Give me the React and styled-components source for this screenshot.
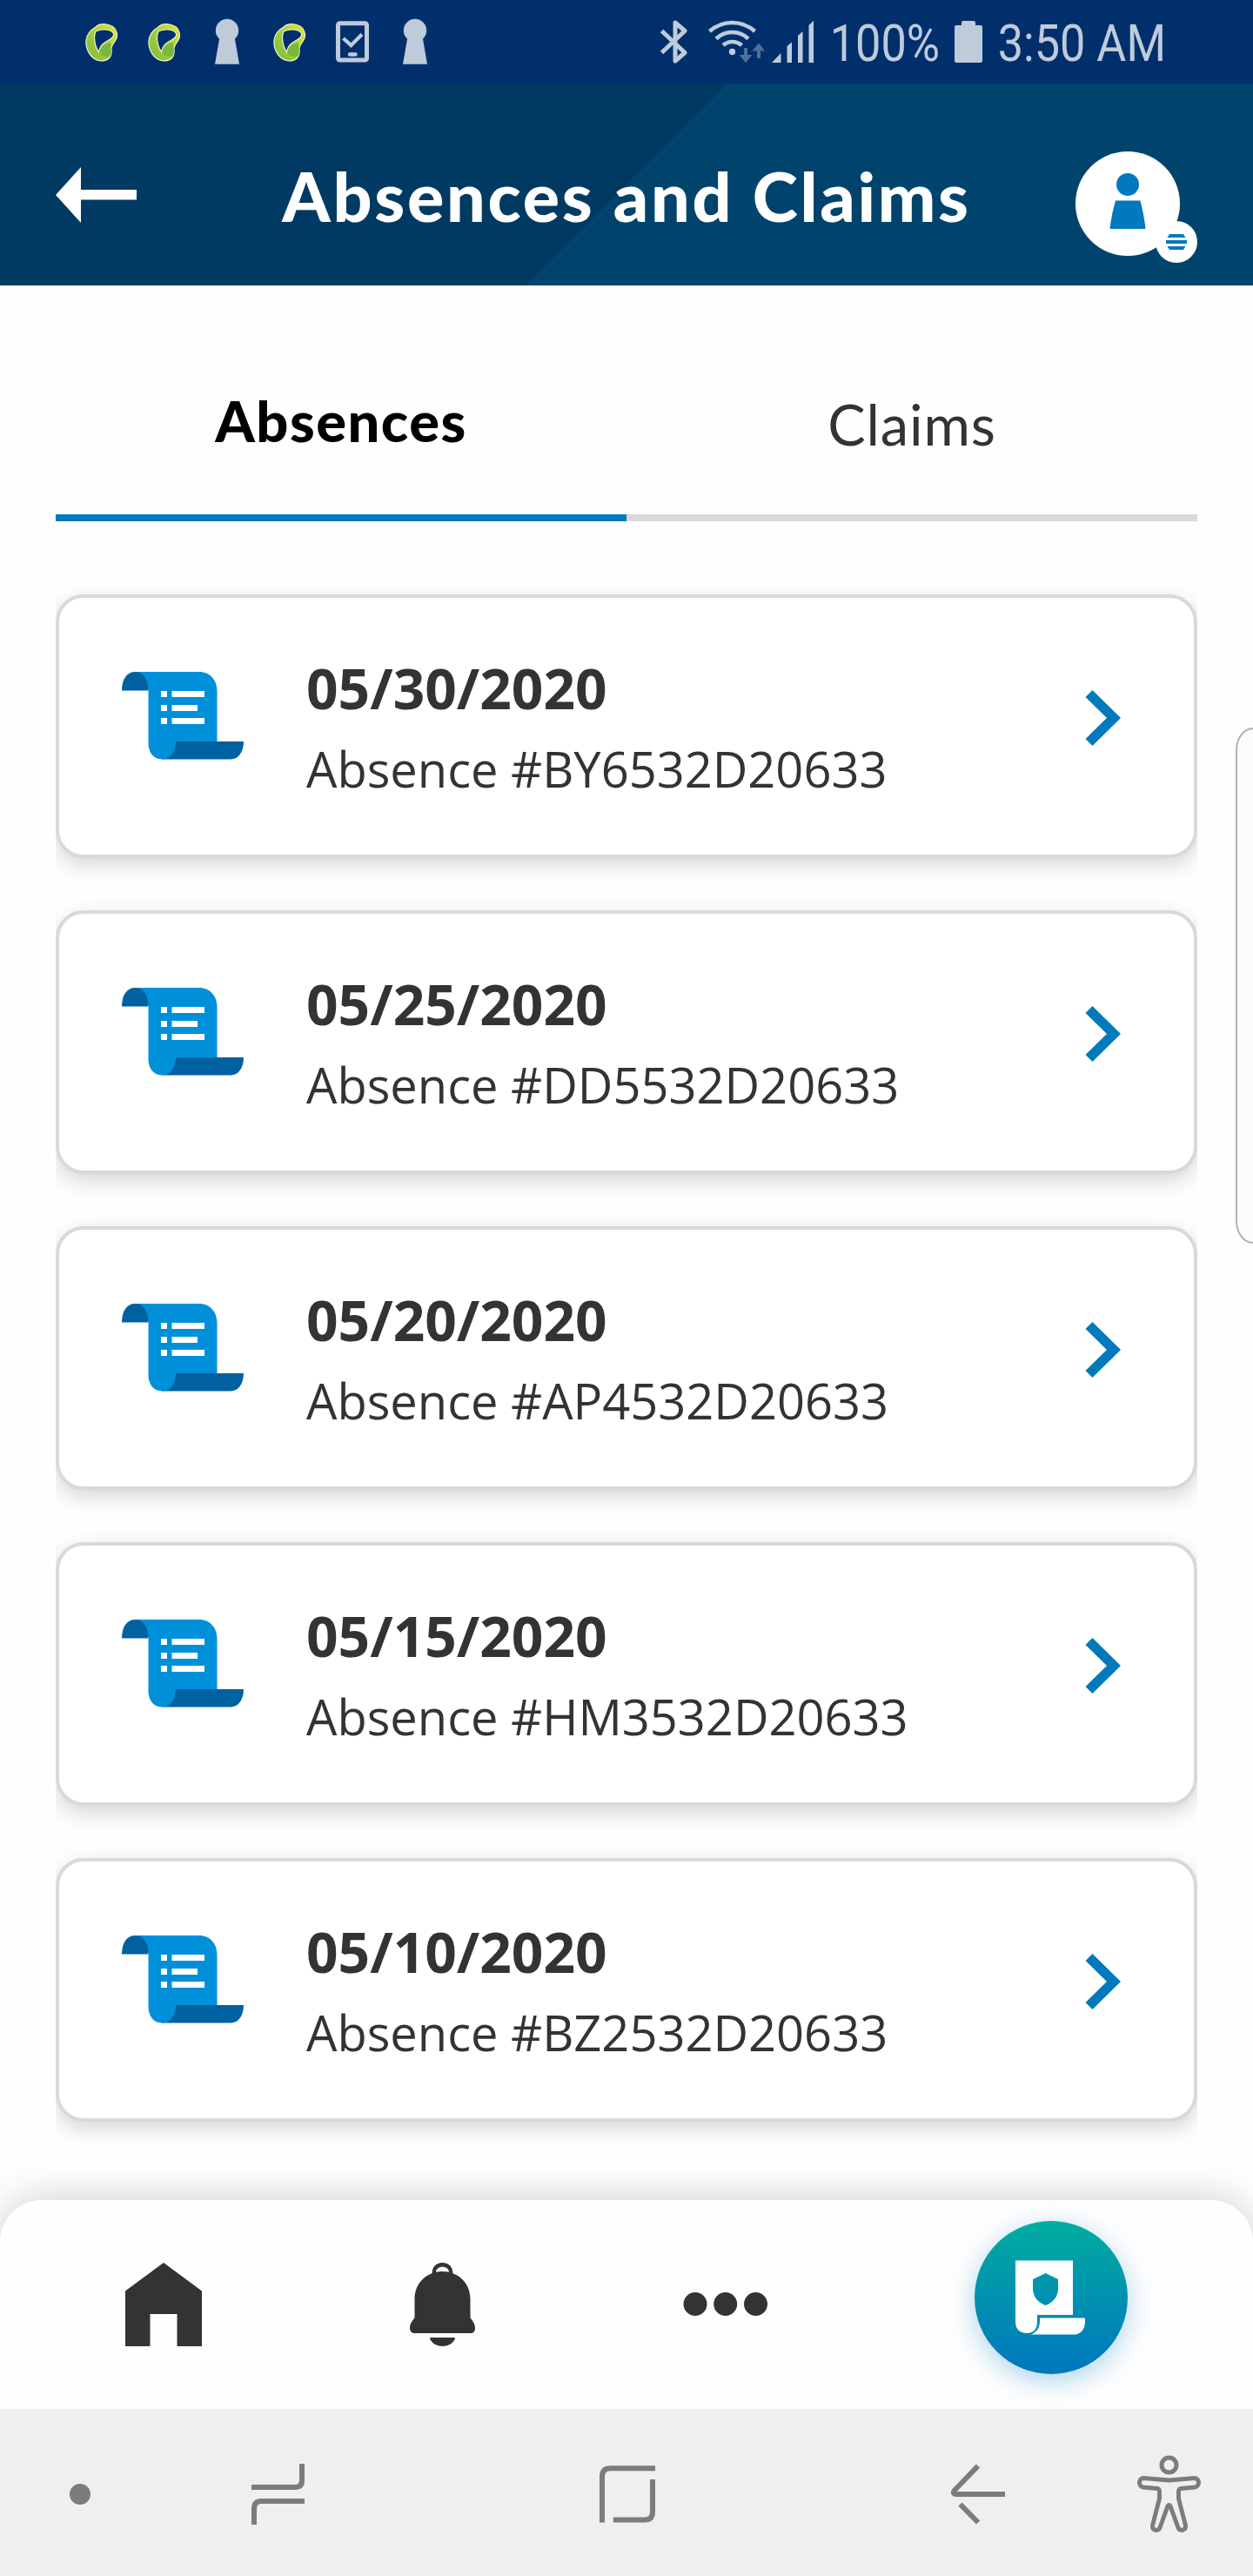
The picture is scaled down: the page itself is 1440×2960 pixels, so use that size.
import React from "react";
import styled, { createGlobalStyle } from "styled-components";

const GlobalStyle = createGlobalStyle`
  * { box-sizing: border-box; }
  html, body { margin: 0; padding: 0; background: #fff; }
  svg { display: block; flex: none; }
`;

const Screen = styled.div`
  position: relative;
  width: 1440px;
  height: 2960px;
  display: flex;
  flex-direction: column;
  overflow: hidden;
  background: #fefefe;
  color: #333;
  font-family: "Open Sans", "Noto Sans", sans-serif;
`;

const StatusBar = styled.div`
  height: 96px;
  flex: none;
  display: flex;
  justify-content: space-between;
  padding: 0 0 0 96px;
  background: #002f6c;
`;

const StatusGroup = styled.div`
  display: flex;
  align-items: flex-start;
`;

const StatusText = styled.span`
  width: ${(p) => p.$width}px;
  height: 96px;
  padding: 2px 0 0 2px;
  font: 400 60px/96px Roboto, sans-serif;
  color: #bfcadb;
  white-space: nowrap;
  transform: scaleX(0.87);
  transform-origin: 0 50%;
`;

const Header = styled.header`
  height: 232px;
  flex: none;
  display: flex;
  align-items: flex-start;
  justify-content: space-between;
  padding: 78px 64px 0;
  background: linear-gradient(135deg, #003a63 0, #003a63 591px, #00446d 592px);
`;

const BackButton = styled.div`
  padding-top: 18px;
  width: 140px;
`;

const Title = styled.h1`
  margin: 0;
  padding-top: 3px;
  font: 900 79px/96px Lato, sans-serif;
  letter-spacing: 2.7px;
  color: #fff;
  white-space: nowrap;
`;

const Content = styled.main`
  height: 2200px;
  flex: none;
  padding: 0 64px;
`;

const Tabs = styled.div`
  display: flex;
  height: 271px;
`;

const Tab = styled.div`
  flex: 1;
  padding-top: ${(p) => (p.$active ? 110 : 114)}px;
  text-align: center;
  font: ${(p) => (p.$active ? 900 : 400)} 65px/90px Lato, sans-serif;
  letter-spacing: ${(p) => (p.$active ? 1.5 : 0.9)}px;
  color: ${(p) => (p.$active ? "#000" : "#333")};
  border-bottom: 8px solid ${(p) => (p.$active ? "#007abc" : "#d9dad5")};
`;

const List = styled.div`
  display: flex;
  flex-direction: column;
  gap: 60px;
  padding: 84px 0 60px;
  overflow: hidden;
`;

const Card = styled.article`
  height: 303px;
  display: flex;
  padding: 0 83px 0 72px;
  border: 4px solid #d9dad5;
  border-radius: 32px;
  background: #fff;
  box-shadow: 0 8px 24px rgba(0, 0, 0, 0.16);
`;

const CardIcon = styled.div`
  width: 212px;
  padding-top: 85px;
`;

const CardText = styled.div`
  flex: 1;
  padding-top: 57px;
`;

const CardDate = styled.div`
  font-size: 64px;
  line-height: 93px;
  font-weight: 700;
  white-space: nowrap;
`;

const CardNumber = styled.div`
  font-size: 56px;
  line-height: 92px;
  white-space: nowrap;
`;

const CardArrow = styled.div`
  padding-top: 106px;
`;

const EdgeHandle = styled.div`
  position: absolute;
  right: -20px;
  top: 836px;
  width: 40px;
  height: 593px;
  border: 2px solid #b0b0b0;
  border-radius: 20px / 26px;
  background: #fcfcfc;
`;

const BottomNav = styled.nav`
  position: relative;
  height: 240px;
  flex: none;
  display: flex;
  align-items: flex-start;
  padding: 24px 144px 0;
  border-radius: 48px 48px 0 0;
  background: #fefefe;
  box-shadow: 0 0 48px rgba(0, 0, 0, 0.2);
`;

const NavItem = styled.div`
  width: ${(p) => p.$width}px;
  padding-top: 48px;
`;

const PolicyButton = styled.div`
  width: 176px;
  height: 176px;
  display: flex;
  padding: 45px 0 0 46px;
  border-radius: 50%;
  background: linear-gradient(180deg, #00ada0, #007abc 92%);
  box-shadow: 0 8px 32px rgba(0, 122, 188, 0.32);
`;

const SystemBar = styled.div`
  position: relative;
  height: 192px;
  flex: none;
  display: flex;
  align-items: center;
  padding: 4px 0 0 80px;
  background: #efefef;
`;

const SystemKey = styled.div`
  width: ${(p) => p.$width}px;
  flex: none;
`;

const STATUS = "#bfcadb";

const Ribbon = () => (
  <svg width="72" height="96" viewBox="96 0 72 96">
    <defs>
      <linearGradient id="ribbon" x1="0" y1="1" x2="1" y2="0">
        <stop offset="0" stopColor="#7dbb3c" />
        <stop offset="0.5" stopColor="#a3cd3a" />
        <stop offset="1" stopColor="#e6e635" />
      </linearGradient>
    </defs>
    <path
      fillRule="evenodd"
      fill="url(#ribbon)"
      stroke="#eef5d2"
      strokeWidth="1.2"
      d="M110 31C115 26 131 26 134 37C137 46 128 49 128 56C129 66 124 70 116 70C104 69 98 56 99 46C100 38 105 34 110 31ZM110 36C107 43 109 54 114 60C114 50 123 48 128 44C133 40 130 36 126 35C120 33 115 34 110 36Z"
    />
    <path fill="#79b83d" d="M114 60C116 52 122 50 127 49L127.500 55C128 61 128 65 124 65C119 65 116 63 114 60Z" />
  </svg>
);

const Keyhole = () => (
  <svg width="72" height="96" viewBox="240 0 72 96" fill={STATUS}>
    <circle cx="261" cy="35" r="13.2" />
    <path d="M252.5 42H269.5L275 73.7H247Z" />
  </svg>
);

const TabletCheck = () => (
  <svg width="72" height="96" viewBox="384 0 72 96" fill="none" stroke={STATUS}>
    <rect x="388.5" y="26.8" width="33" height="42.2" rx="2" strokeWidth="5" />
    <path d="M394.5 44L403.5 52L416 39.5" strokeWidth="4.2" />
    <path d="M402 62.5H408.5" strokeWidth="4.4" strokeLinecap="round" />
  </svg>
);

const Connectivity = () => (
  <svg width="196" height="96" viewBox="756 0 196 96" fill="none" stroke={STATUS}>
    <path d="M760.5 35.5L787 60.5L776 70V26L787 35.5L760.5 60.5" strokeWidth="5" strokeLinejoin="round" />
    <path d="M815.5 36C830 22.5 853 22.5 867.5 36M823 44.5C833.5 34.5 849.5 34.5 860 44.5M831 52C837 46.5 846 46.5 852.5 52" strokeWidth="4.5" />
    <circle cx="841.5" cy="59.5" r="3.7" fill={STATUS} stroke="none" />
    <g fill="#4f6f9b" stroke="none">
      <path d="M855 55H859V63H864.5L857 72L849.5 63H855Z" />
      <path d="M870 67H874V58.5H879L872 49.5L864.5 58.5H870Z" />
    </g>
    <path d="M887 72L897.5 61V72ZM904.5 72V53L910 48.5V72ZM917 72V41L922.5 36V72ZM929.5 72V29L935 24V72Z" fill={STATUS} stroke="none" />
  </svg>
);

const Battery = () => (
  <svg width="49" height="96" viewBox="1096 0 49 96" fill={STATUS}>
    <path d="M1099 29H1105V26Q1105 24 1107 24H1119Q1121 24 1121 26V29H1127Q1129 29 1129 31V70Q1129 72 1127 72H1099Q1097 72 1097 70V31Q1097 29 1099 29Z" />
  </svg>
);

const BackArrow = () => (
  <svg width="93" height="64" viewBox="0 0 93 64" fill="#fff">
    <path d="M0 32L29 0V26H93V37.5H29V64Z" />
  </svg>
);

const Avatar = () => (
  <svg width="140" height="128" viewBox="0 0 140 128">
    <circle cx="60" cy="60" r="60" fill="#fff" />
    <circle cx="60" cy="38" r="13" fill="#007abc" />
    <path d="M46 56.5H74.5Q79 74 80.5 89H39.5Q41 74 46 56.5Z" fill="#007abc" />
    <circle cx="116" cy="104" r="24" fill="#fff" />
    <path d="M108 95H124L126.5 99H105.5ZM104 102H128V106H104ZM105.5 109H126.5L124 113H108Z" fill="#007abc" />
  </svg>
);

const ScrollIcon = () => (
  <svg width="140" height="101" viewBox="0 0 140 101">
    <path d="M62 80H140C140 92 134 100.500 125 100.500H46Z" fill="#0061a0" />
    <path d="M15 0H89C101 0 109.500 9 109.500 22V80H62C62 92 56 100.500 46 100.500C36 100.500 30.500 92 30.500 82V20Z" fill="#0090da" />
    <path d="M0 21.500C0 8 6 0 15.500 0C25 0 30.500 9 30.500 21.500Z" fill="#0061a0" />
    <path d="M45 22H52V29H45ZM57.5 22H95V29H57.5ZM45 38H52V45H45ZM57.5 38H87V45H57.5ZM45 53H52V60H45ZM57.5 53H95V60H57.5Z" fill="#fff" />
  </svg>
);

const Chevron = () => (
  <svg width="42" height="64" viewBox="0 0 42 64" fill="#007abc">
    <path d="M8.5 0L41 32L8.5 64L0.5 56L25 32L0.5 8Z" />
  </svg>
);

const HomeIcon = () => (
  <svg width="88" height="96" viewBox="0 0 88 96" fill="#333">
    <path d="M44 0L88 32.5V96H59.5V59H28.5V96H0V32.5Z" />
  </svg>
);

const BellIcon = () => (
  <svg width="76" height="96" viewBox="0 0 76 96" fill="#333">
    <path d="M25.5 13C25.5 5 30 0 37.5 0C45 0 49.5 5 49.5 13L45 11C45 2.5 30 2.5 30 11Z" />
    <path d="M37.5 10C54 10 69.5 22 69.5 42V63C71 66 75 69 75 75C75 79 73 81 69.5 81H6C2.5 81 0 79 0 75C0 69 4 66 5.5 63V42C5.5 22 21 10 37.5 10Z" />
    <path d="M24 86H51Q52.5 86 51.5 88.5Q47 96 37.5 96Q28 96 23.5 88.5Q22.5 86 24 86Z" />
  </svg>
);

const MoreIcon = () => (
  <svg width="98" height="96" viewBox="0 0 98 96" fill="#333">
    <circle cx="14" cy="47.5" r="13.5" />
    <circle cx="48.7" cy="47.5" r="13.5" />
    <circle cx="83.5" cy="47.5" r="13.5" />
  </svg>
);

const PolicyIcon = () => (
  <svg width="82" height="86" viewBox="1166 2597 82 86" fill="#fff">
    <path
      fillRule="evenodd"
      d="M1167 2597.5H1233V2660H1192V2668C1192 2677 1187 2681 1180 2681C1172 2681 1167 2676 1167 2668ZM1201.7 2612L1187 2619V2630C1187 2639 1193 2646 1201.7 2649C1210 2646 1216 2639 1216 2630V2619Z"
    />
    <path d="M1195 2663.5H1247V2668C1247 2677 1241 2682.5 1235 2682.5H1184.5C1192 2680 1195 2674 1195 2667Z" />
  </svg>
);

const KEY = "#7c7c7c";

const DotKey = () => (
  <svg width="24" height="24" viewBox="0 0 24 24"><circle cx="12" cy="12" r="12" fill={KEY} /></svg>
);

const RecentsKey = () => (
  <svg width="62" height="72" viewBox="289 2830 62 72" fill="none" stroke={KEY} strokeWidth="6">
    <path d="M347 2831V2850Q347 2858 339 2858H289M350 2874H300Q292 2874 292 2883V2901" />
  </svg>
);

const HomeKey = () => (
  <svg width="66" height="68" viewBox="688 2832 66 68" fill="none" stroke={KEY} strokeWidth="6">
    <path d="M753 2836.3H701Q692 2836.3 692 2846V2898.5M750 2849V2886Q750 2895.5 741 2895.5H704.8" />
  </svg>
);

const BackKey = () => (
  <svg width="64" height="72" viewBox="1092 2830 64 72" fill="none" stroke={KEY} strokeWidth="6">
    <path d="M1124 2833.5L1097 2861.5Q1094 2866 1099 2866H1155M1103.5 2877.5L1124 2898.5" strokeLinejoin="round" />
  </svg>
);

const AccessibilityKey = () => (
  <svg width="74" height="90" viewBox="1306 2821 74 90" fill="none" stroke={KEY} strokeWidth="5" strokeLinejoin="round">
    <circle cx="1343.5" cy="2832.5" r="8.5" />
    <path d="M1343.5 2850L1373 2847.500C1379 2848 1379 2857 1373 2858L1357 2859.500Q1354.500 2860 1354.500 2863V2871L1362.500 2902C1363 2908 1356 2909 1354 2904.500L1345.500 2881Q1343.500 2876 1341.500 2881L1333 2904.500C1331 2909 1324 2908 1324.500 2902L1332.500 2871V2863Q1332.500 2860 1330 2859.500L1314 2858C1308 2857 1308 2848 1314 2847.500Z" />
  </svg>
);

const absences = [
  { date: "05/30/2020", number: "BY6532D20633" },
  { date: "05/25/2020", number: "DD5532D20633" },
  { date: "05/20/2020", number: "AP4532D20633" },
  { date: "05/15/2020", number: "HM3532D20633" },
  { date: "05/10/2020", number: "BZ2532D20633" },
];

export default function App() {
  return (
    <>
      <GlobalStyle />
      <Screen>
        <StatusBar>
          <StatusGroup>
            <Ribbon />
            <Ribbon />
            <Keyhole />
            <Ribbon />
            <TabletCheck />
            <Keyhole />
          </StatusGroup>
          <StatusGroup>
            <Connectivity />
            <StatusText $width={144}>100%</StatusText>
            <Battery />
            <StatusText $width={295}>3:50 AM</StatusText>
          </StatusGroup>
        </StatusBar>
        <Header>
          <BackButton><BackArrow /></BackButton>
          <Title>Absences and Claims</Title>
          <Avatar />
        </Header>
        <Content>
          <Tabs>
            <Tab $active>Absences</Tab>
            <Tab>Claims</Tab>
          </Tabs>
          <List>
            {absences.map((item) => (
              <Card key={item.number}>
                <CardIcon><ScrollIcon /></CardIcon>
                <CardText>
                  <CardDate>{item.date}</CardDate>
                  <CardNumber>Absence #{item.number}</CardNumber>
                </CardText>
                <CardArrow><Chevron /></CardArrow>
              </Card>
            ))}
          </List>
        </Content>
        <BottomNav>
          <NavItem $width={327}><HomeIcon /></NavItem>
          <NavItem $width={313.5}><BellIcon /></NavItem>
          <NavItem $width={335.5}><MoreIcon /></NavItem>
          <PolicyButton><PolicyIcon /></PolicyButton>
        </BottomNav>
        <SystemBar>
          <SystemKey $width={209}><DotKey /></SystemKey>
          <SystemKey $width={399}><RecentsKey /></SystemKey>
          <SystemKey $width={404}><HomeKey /></SystemKey>
          <SystemKey $width={214}><BackKey /></SystemKey>
          <AccessibilityKey />
        </SystemBar>
        <EdgeHandle />
      </Screen>
    </>
  );
}
